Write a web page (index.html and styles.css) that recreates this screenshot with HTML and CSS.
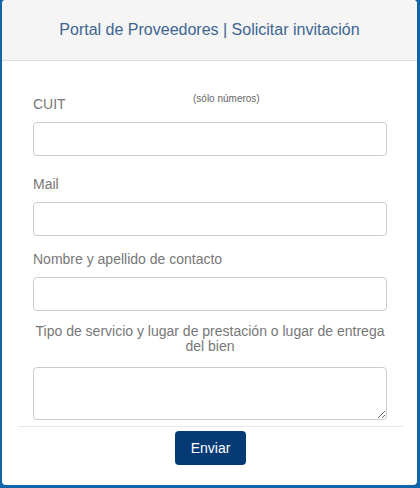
FILE: index.html
```
<!DOCTYPE html>
<html lang="es">
<head>
    <meta charset="UTF-8">
    <meta name="viewport" content="width=device-width, initial-scale=1.0">
    <title>Portal de Proveedores - Solicitar invitación</title>
    <link rel="stylesheet" href="styles.css">
</head>
<body>
    <div class="panel">
        <div class="panel-heading">Portal de Proveedores | Solicitar invitación</div>

        <form class="panel-body">
            <div class="form-group first">
                <label class="label-row" for="cuit">CUIT <small class="hint">(sólo números)</small></label>
                <input type="text" id="cuit">
            </div>
            <div class="form-group">
                <label for="mail">Mail</label>
                <input type="text" id="mail">
            </div>
            <div class="form-group">
                <label for="nombre">Nombre y apellido de contacto</label>
                <input type="text" id="nombre">
            </div>
            <div class="form-group">
                <label class="centered" for="tipo">Tipo de servicio y lugar de prestación o lugar de entrega del bien</label>
                <textarea id="tipo"></textarea>
            </div>
        </form>

        <div class="panel-footer">
            <button type="button">Enviar</button>
        </div>
    </div>
</body>
</html>
```

FILE: styles.css
```
body {
    margin: 0;
    background: #1066a8;
    font-family: Arial, "Liberation Sans", sans-serif;
    font-size: 14px;
}
.panel {
    margin: 0 3px 3px 2px;
    background: white;
    border-radius: 4px;
    overflow: hidden;
}
.panel-heading {
    background: #f5f5f5;
    border-bottom: 1px solid #dddddd;
    color: #3d6590;
    font-size: 16px;
    line-height: 20px;
    padding: 20px 0 20px 0;
    height: 20px;
    text-align: center;
}
.panel-body {
    margin: 0;
    padding: 33px 30px 0 31px;
}
.form-group {
    margin-bottom: 13px;
}
.form-group.first {
    margin-bottom: 18px;
}
label {
    display: block;
    color: #777777;
    line-height: 20px;
    margin-bottom: 8px;
}
.label-row {
    position: relative;
}
.hint {
    position: absolute;
    left: 160px;
    top: -5px;
    font-size: 10px;
    color: #666666;
}
.centered {
    text-align: center;
    line-height: 15px;
    margin-bottom: 13px;
}
input, textarea {
    display: block;
    box-sizing: border-box;
    width: 100%;
    border: 1px solid #cccccc;
    border-radius: 4px;
    background: white;
    font-family: inherit;
    font-size: 14px;
    margin: 0;
}
input {
    height: 34px;
}
textarea {
    height: 53px;
}
.form-group:last-child {
    margin-bottom: 6px;
}
.panel-footer {
    margin: 0 14px 0 16px;
    border-top: 1px solid #e8e8e8;
    padding: 4px 0 20px 0;
    text-align: center;
}
button {
    background: #063a75;
    color: white;
    border: none;
    border-radius: 4px;
    font-family: inherit;
    font-size: 14px;
    line-height: 20px;
    padding: 7px 16px;
    margin: 0;
}
```
